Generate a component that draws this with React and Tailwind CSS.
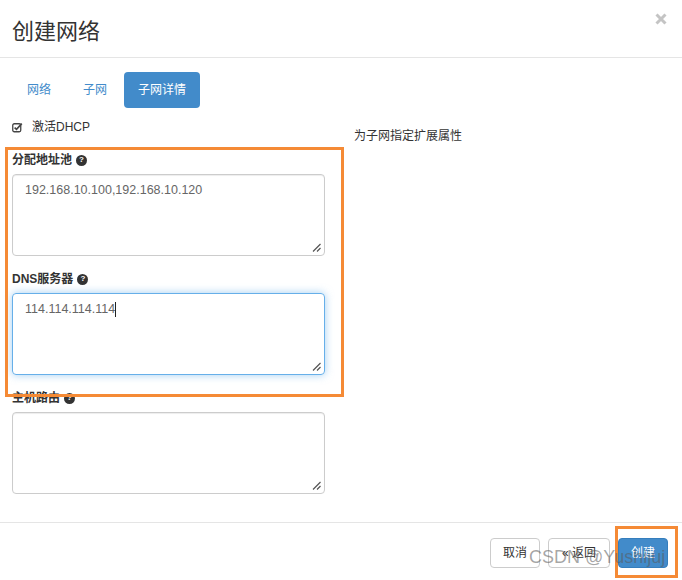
import React from 'react';

const HelpIcon = () => (
    <span className="inline-flex items-center justify-center w-[11px] h-[11px] rounded-full bg-[#333] text-white text-[8px] font-bold leading-none ml-[4px] font-['Liberation_Sans',sans-serif]">
        ?
    </span>
);

const ResizeGrip = () => (
    <svg className="absolute right-[3px] bottom-[3px]" width="9" height="9" viewBox="0 0 9 9">
        <path d="M8.5 1 L1 8.5 M8.5 5 L5 8.5" stroke="#555" strokeWidth="1.2" fill="none" />
    </svg>
);

const Field = ({ label, value, focused, caret }) => (
    <div>
        <div className="h-[18px] flex items-center text-[12px] font-bold text-[#333]">
            {label}
            <HelpIcon />
        </div>
        <div
            className={`relative mt-[5px] h-[82px] rounded-[4px] border px-[12px] py-[6px] text-[12.5px] leading-[18px] text-[#666] ${focused
                ? 'border-[#66afe9] shadow-[0_0_8px_rgba(102,175,233,0.6)]'
                : 'border-[#ccc] shadow-[inset_0_1px_1px_rgba(0,0,0,0.075)]'
                }`}
        >
            <span className="font-['Liberation_Sans',sans-serif]">{value}</span>
            {caret && <span className="inline-block w-px h-[15px] bg-[#222] align-middle" />}
            <ResizeGrip />
        </div>
    </div>
);

const App = () => {
    return (
        <div className="relative w-[682px] h-[580px] bg-white overflow-hidden font-['Liberation_Sans','Noto_Sans_CJK_SC',sans-serif] text-[#333]">
            {/* Header */}
            <div className="h-[58px] border-b border-[#e5e5e5] flex justify-between px-[12px]">
                <h1 className="self-center text-[22px] font-normal text-[#333] leading-none font-['Noto_Sans_CJK_SC',sans-serif]">创建网络</h1>
                <svg className="mt-[13px] mr-[3px]" width="12" height="12" viewBox="0 0 12 12">
                    <path d="M1.5 1.5 L10.5 10.5 M10.5 1.5 L1.5 10.5" stroke="#c4c4c4" strokeWidth="3" />
                </svg>
            </div>

            {/* Body */}
            <div className="px-[12px] pt-[14px]">
                <div className="flex gap-[2px] h-[36px] text-[12px]">
                    <div className="px-[15px] flex items-center text-[#428bca]">网络</div>
                    <div className="px-[15px] flex items-center text-[#428bca]">子网</div>
                    <div className="px-[14px] flex items-center rounded-[4px] bg-[#428bca] text-white">子网详情</div>
                </div>

                <div className="flex mt-[10px]">
                    <div className="w-[313px]">
                        <div className="h-[18px] flex items-center text-[12px] text-[#333]">
                            <svg width="11" height="11" viewBox="0 0 11 11" className="mr-[9px]">
                                <rect x="0.75" y="1.75" width="8" height="8" rx="1.5" fill="none" stroke="#444" strokeWidth="1.3" />
                                <path d="M2.6 5.6 L4.5 7.4 L9.8 1.6" fill="none" stroke="#444" strokeWidth="1.6" />
                            </svg>
                            激活DHCP
                        </div>
                        <div className="mt-[15px] flex flex-col gap-[14px]">
                            <Field label="分配地址池" value="192.168.10.100,192.168.10.120" />
                            <Field label="DNS服务器" value="114.114.114.114" focused caret />
                            <Field label="主机路由" value="" />
                        </div>
                    </div>
                    <div className="ml-[29px] pt-[9px] text-[12px] leading-[18px] text-[#333]">为子网指定扩展属性</div>
                </div>
            </div>

            {/* Footer */}
            <div className="mt-[28px] border-t border-[#e5e5e5] pt-[15px] pr-[14px] flex justify-end gap-[8px] text-[12px]">
                <button className="h-[30px] px-[12px] rounded-[4px] border border-[#ccc] bg-white text-[#333]">取消</button>
                <button className="h-[30px] px-[13px] rounded-[4px] border border-[#ccc] bg-white text-[#333]">« 返回</button>
                <button className="h-[30px] px-[12px] rounded-[4px] border border-[#357ebd] bg-[#428bca] text-white">创建</button>
            </div>

            {/* Highlight boxes */}
            <div className="absolute left-[5px] top-[147px] w-[339px] h-[250px] border-[3px] border-[#f58a35] pointer-events-none" />
            <div className="absolute left-[615px] top-[526px] w-[63px] h-[52px] border-[3px] border-[#f58a35] pointer-events-none" />

            {/* Watermark */}
            <div className="absolute left-[529px] top-[545px] text-[18px] leading-[24px] text-[rgba(90,90,90,0.55)] font-['Liberation_Sans',sans-serif] pointer-events-none">
                CSDN @Yushijuj
            </div>
        </div>
    );
};

export default App;
